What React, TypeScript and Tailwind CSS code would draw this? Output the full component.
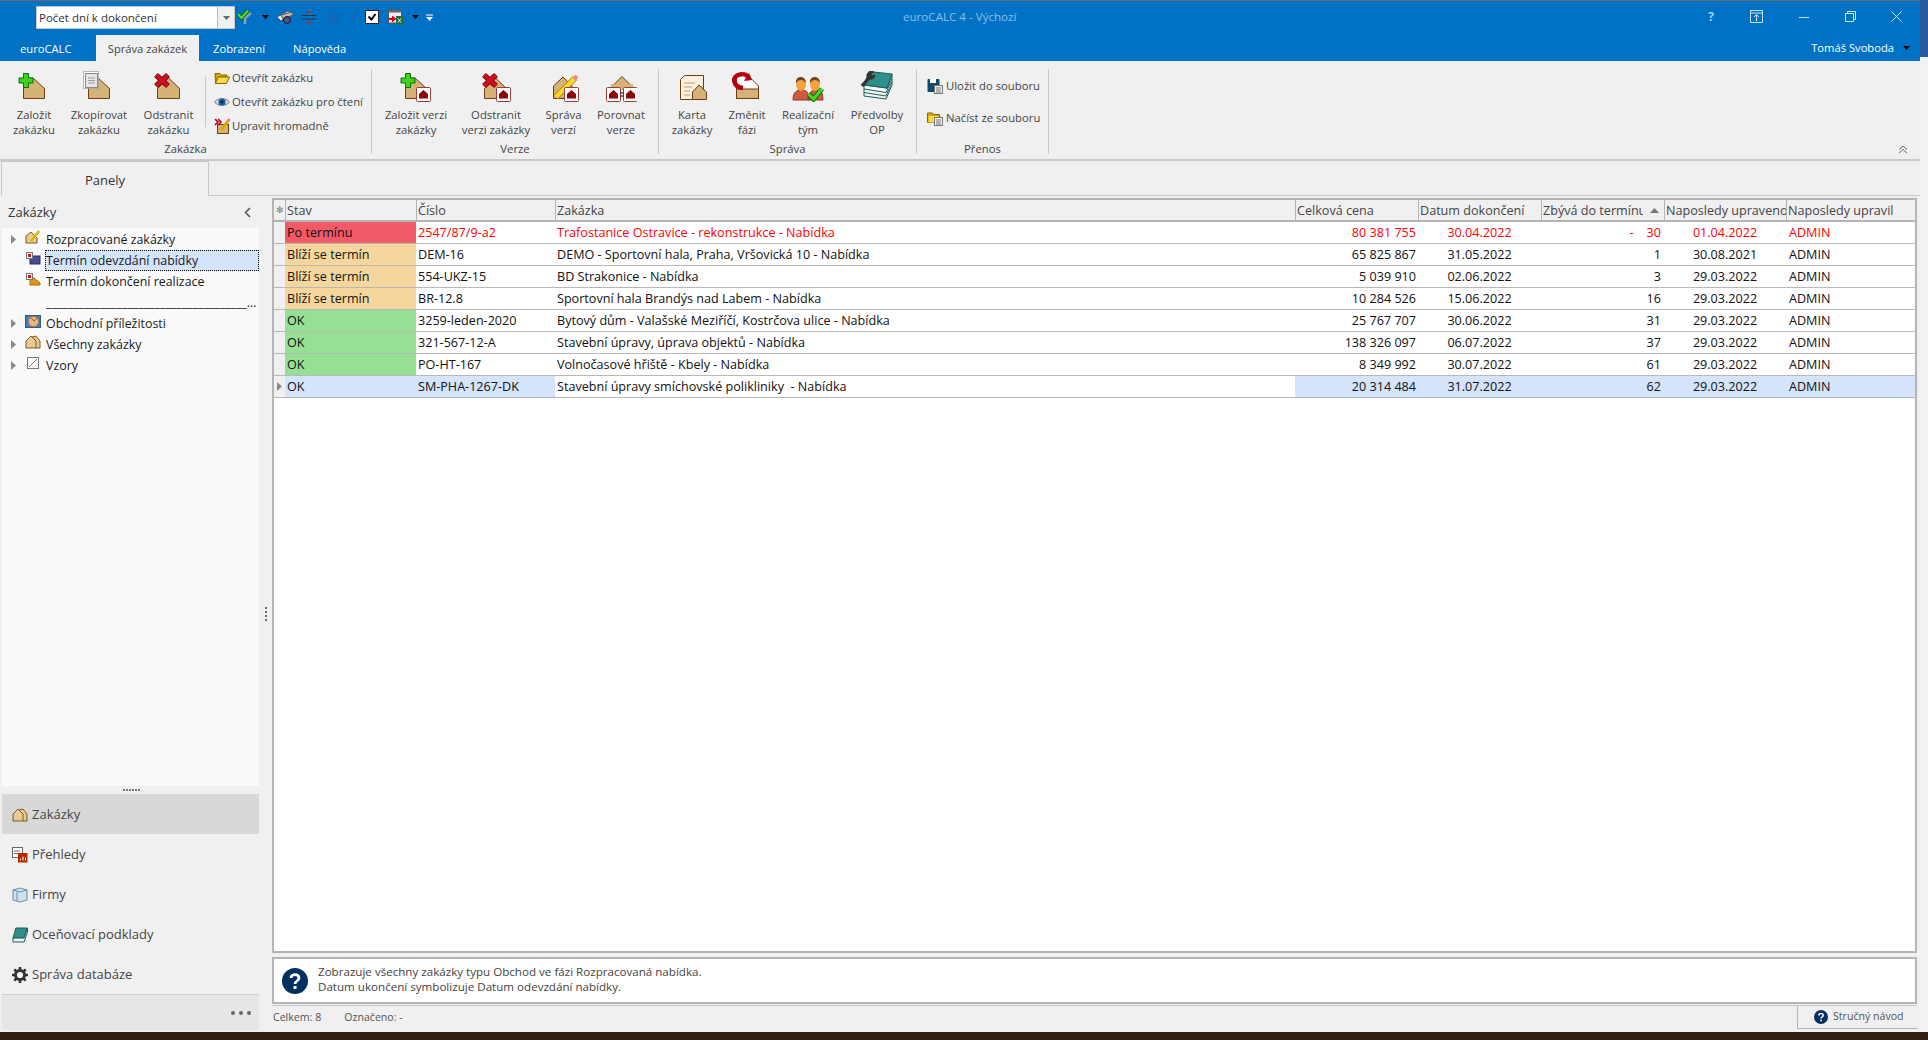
import type { ReactNode } from 'react';

const houseFill = '#d5b276';
const houseLine = '#6e3b12';

function Ico({ children, className = 'w-[32px] h-[32px]', box = 32 }: { children: ReactNode; className?: string; box?: number }) {
  return (
    <svg viewBox={`0 0 ${box} ${box}`} className={`${className} shrink-0`}>
      {children}
    </svg>
  );
}

const CutHouse = () => (
  <polygon points="5.5,8 15,8 26.5,18.5 26.5,28.5 5.5,28.5" fill={houseFill} stroke={houseLine} />
);
const PeakHouse = () => (
  <polygon points="15.5,8 26.5,18.5 26.5,28.5 4.5,28.5 4.5,18.5" fill={houseFill} stroke={houseLine} />
);
const Plus = () => (
  <polygon
    points="5.5,3.5 10.5,3.5 10.5,8 15,8 15,13 10.5,13 10.5,17.5 5.5,17.5 5.5,13 1,13 1,8 5.5,8"
    fill="#3fd41a"
    stroke="#0e6f0a"
  />
);
const Cross = ({ x = 0 }: { x?: number }) => (
  <g transform={`translate(${x} 0)`}>
    <path d="M3 5 L15 16 M15 5 L3 16" stroke="#6d0a10" strokeWidth="5.6" />
    <path d="M3 5 L15 16 M15 5 L3 16" stroke="#d5101c" strokeWidth="3.6" />
  </g>
);
const Badge = ({ x = 16.5 }: { x?: number }) => (
  <g transform={`translate(${x} 17.5)`}>
    <rect x="0" y="0" width="14" height="14" rx="1" fill="#fff" stroke="#9a3a3a" />
    <polygon points="7,2.5 11.5,6.5 11.5,11 2.5,11 2.5,6.5" fill="#8c0508" />
  </g>
);

const icons: Record<string, ReactNode> = {
  zalozit: (
    <Ico>
      <CutHouse />
      <Plus />
    </Ico>
  ),
  zkopirovat: (
    <Ico>
      <CutHouse />
      <rect x="0.5" y="1.5" width="15" height="17" fill="#fff" stroke="#777" strokeDasharray="1 1" />
      <rect x="2.5" y="3.5" width="12" height="14" fill="#e6e6e6" stroke="#888" />
      <path d="M5 8h7M5 10.5h7M5 13h7" stroke="#999" />
    </Ico>
  ),
  odstranit: (
    <Ico>
      <PeakHouse />
      <Cross />
    </Ico>
  ),
  zalozitVerzi: (
    <Ico>
      <CutHouse />
      <Plus />
      <Badge />
    </Ico>
  ),
  odstranitVerzi: (
    <Ico>
      <PeakHouse />
      <Cross x={1} />
      <Badge />
    </Ico>
  ),
  spravaVerzi: (
    <Ico>
      <polygon points="15,7 24,16 24,28.5 5.5,28.5 5.5,16" fill={houseFill} stroke={houseLine} />
      <path d="M8 27 L27 8" stroke="#b58a00" strokeWidth="6" />
      <path d="M8 27 L27 8" stroke="#ffd92e" strokeWidth="4" />
      <path d="M26 9 L29 6" stroke="#e88" strokeWidth="4" />
      <Badge />
    </Ico>
  ),
  porovnat: (
    <Ico>
      <polygon points="17,6.5 28,17.5 6,17.5" fill={houseFill} stroke={houseLine} />
      <rect x="6" y="14" width="22" height="6" fill={houseFill} />
      <Badge x={1.5} />
      <Badge x={18.5} />
      <path d="M15.5 23h3M15.5 26h3" stroke="#000" />
    </Ico>
  ),
  karta: (
    <Ico>
      <polygon points="8.5,5.5 27.5,5.5 27.5,29.5 4.5,29.5 4.5,9.5" fill="#fbf1e0" stroke={houseLine} />
      <path d="M8 13h11M8 17h8M8 21h6M8 25h6" stroke="#c49a6c" />
      <polygon points="23,15 30.5,22 30.5,29.5 16.5,29.5 16.5,22" fill={houseFill} stroke={houseLine} />
    </Ico>
  ),
  zmenit: (
    <Ico>
      <polygon points="5.5,4.5 16,4.5 27.5,16 27.5,28.5 5.5,28.5" fill="#fff" stroke={houseLine} />
      <rect x="5.5" y="19" width="22" height="9.5" fill={houseFill} stroke={houseLine} />
      <path d="M12 18 C2 17 0 6 9 4.5 C13 3.5 16 5 17 7" fill="none" stroke="#b4000c" strokeWidth="4.5" />
      <polygon points="13,11 21,10 18,3" fill="#b4000c" />
    </Ico>
  ),
  tym: (
    <Ico>
      <path d="M1 30 C1 22 5 20 9 20 C14 20 17 22 17 30Z" fill="#cf5a3c" stroke="#8c3a28" />
      <path d="M16 30 C16 22 20 20 24 20 C28 20 31 22 31 30Z" fill="#cf5a3c" stroke="#8c3a28" />
      <ellipse cx="9" cy="14" rx="5" ry="7" fill="#f6a13a" />
      <ellipse cx="23" cy="14" rx="5" ry="7" fill="#f6a13a" />
      <path d="M4 13 C3 5 14 5 14 13 C11 9 7 9 4 13Z" fill="#6b4a2a" />
      <path d="M18 13 C17 5 28 5 28 13 C25 9 21 9 18 13Z" fill="#6b4a2a" />
      <path d="M16.5 24 L21.5 29 L30 19" fill="none" stroke="#0c6a0c" strokeWidth="5" />
      <path d="M16.5 24 L21.5 29 L30 19" fill="none" stroke="#3fe01a" strokeWidth="3" />
    </Ico>
  ),
  predvolby: (
    <Ico>
      <path d="M3 15 L3 26 L25 29 L31 15 L31 4 L26 18Z" fill="#f2f7f6" stroke="#1c5c5a" />
      <path d="M3 19 L25 22.5 L31 8.5 M3 22.5 L25 26 L31 12" fill="none" stroke="#1c5c5a" />
      <polygon points="8,1.5 31,4 26,18 3,15" fill="#2f8f8a" stroke="#1c5c5a" />
      <path d="M1 16 L8 8" stroke="#333" strokeWidth="3.4" />
      <path d="M13 2 C8 0 4 4 7 8 C10 11 14 8 14 5 L11 6 L10 3Z" fill="#333" stroke="#333" />
    </Ico>
  ),
};

const sm = 'w-[16px] h-[16px]';

const FolderOpen = () => (
  <Ico box={16} className={sm}>
    <path d="M1 3.5h5l1 1.5h6v2H4L1.5 13.5z" fill="#d9a400" stroke="#8a6a00" />
    <polygon points="4,7 15.5,7 12.5,13.5 1.5,13.5" fill="#ffd84a" stroke="#8a6a00" />
  </Ico>
);
const EyeIcon = () => (
  <Ico box={16} className={sm}>
    <path d="M0.5 8 C4 3.5 12 3.5 15.5 8 C12 12.5 4 12.5 0.5 8Z" fill="#d6dde5" stroke="#6d7b8a" />
    <circle cx="8" cy="8" r="3.6" fill="#1a5fa8" />
    <circle cx="8" cy="8" r="1.4" fill="#06244a" />
  </Ico>
);
const HromadneIcon = () => (
  <Ico box={16} className={sm}>
    <rect x="3.5" y="6.5" width="11" height="9" fill={houseFill} stroke={houseLine} />
    <path d="M1 1l3 3-3 3M4 1l3 3-3 3" fill="none" stroke="#c00010" strokeWidth="1.6" />
    <path d="M7 12 L14 3" stroke="#d9a900" strokeWidth="3" />
    <path d="M14 3 L15.5 1" stroke="#e59" strokeWidth="2.4" />
  </Ico>
);
const SaveIcon = () => (
  <Ico box={16} className={sm}>
    <rect x="0.5" y="1" width="12" height="13" rx="1" fill="#0f4a66" />
    <rect x="3" y="1" width="6" height="4" fill="#fff" />
    <rect x="7.5" y="7.5" width="8" height="8" fill="#eee" stroke="#777" />
    <path d="M9 10h5M9 12h5M9 14h5" stroke="#777" />
  </Ico>
);
const LoadIcon = () => (
  <Ico box={16} className={sm}>
    <path d="M0.5 3h5l1 1.5h6v8h-12z" fill="#d9a400" stroke="#8a6a00" />
    <rect x="1.5" y="6" width="10" height="6.5" fill="#ffd84a" />
    <rect x="7.5" y="7.5" width="8" height="8" fill="#eee" stroke="#777" />
    <path d="M9 10h5M9 12h5M9 14h5" stroke="#777" />
  </Ico>
);

function LargeBtn({ icon, lines, className }: { icon: string; lines: string[]; className: string }) {
  return (
    <div className={`flex flex-col items-center pt-[9px] ${className}`}>
      {icons[icon]}
      <div className="mt-[5px] text-center leading-[15px] whitespace-nowrap">
        {lines.map(l => (
          <div key={l}>{l}</div>
        ))}
      </div>
    </div>
  );
}

function SmallBtn({ icon, label }: { icon: ReactNode; label: string }) {
  return (
    <div className="flex h-[24px] items-center gap-[3px] whitespace-nowrap">
      {icon}
      <span>{label}</span>
    </div>
  );
}

function RibbonGroup({ width, label, children }: { width: string; label: string; children: ReactNode }) {
  return (
    <div className={`flex ${width}`}>
      <div className="flex flex-1 flex-col">
        <div className="flex h-[78px]">{children}</div>
        <div className="h-[20px] text-center leading-[19px]">{label}</div>
      </div>
      <div className="mt-[8px] h-[85px] w-px bg-[#c8c8c8]" />
    </div>
  );
}

const Caret = ({ className = 'text-black' }: { className?: string }) => (
  <svg viewBox="0 0 7 4" className={`h-[4px] w-[7px] shrink-0 ${className}`}>
    <polygon points="0,0 7,0 3.5,4" fill="currentColor" />
  </svg>
);

function Qat() {
  return (
    <div className="flex w-[903px] items-start pl-[36px] pt-[5px]">
      <div className="flex h-[23px] w-[199px] border border-[#c8c8c8] bg-white">
        <div className="flex-1 pl-[2px] text-[11.5px] leading-[21px] text-[#333]">Počet dní k dokončení</div>
        <div className="flex w-[17px] items-center justify-center border-l border-[#b8b8b8] bg-[#f0f0f0]">
          <Caret className="text-[#666]" />
        </div>
      </div>
      <div className="flex h-[22px] items-center">
        <svg viewBox="0 0 16 16" className="ml-[2px] h-[16px] w-[16px]">
          <path d="M8 9 L14 4 M8 9 V15" stroke="#8aa0b0" strokeWidth="2.5" />
          <path d="M1 5 L4.5 9 L11 1.5" fill="none" stroke="#0d5a10" strokeWidth="3.6" />
          <path d="M1 5 L4.5 9 L11 1.5" fill="none" stroke="#58e020" strokeWidth="2" />
        </svg>
        <Caret className="ml-[9px] text-black" />
        <svg viewBox="0 0 18 16" className="ml-[7px] h-[16px] w-[18px]">
          <path d="M1 8 L12 2 L15 4 L5 12Z" fill="#eee" stroke="#555" />
          <path d="M5 6 L16 3 L17 6 L7 10Z" fill="#bbb" stroke="#555" />
          <circle cx="11" cy="11" r="3.5" fill="#5b4a6a" stroke="#2a1030" />
          <circle cx="11" cy="11" r="1.5" fill="#0072c6" />
        </svg>
        <svg viewBox="0 0 16 16" className="ml-[7px] h-[16px] w-[16px]">
          <path d="M1 6.5h14M1 10h14" stroke="#234" />
          <polygon points="8,4.5 5.5,2 10.5,2" fill="#e01010" />
          <polygon points="8,12 5.5,14.5 10.5,14.5" fill="#e01010" />
        </svg>
        <svg viewBox="0 0 16 16" className="ml-[8px] h-[16px] w-[16px]">
          <path d="M3 2v11M3 2h5M3 7h4M3 13h5M8 5h5v4H8zM8 11h5v4H8z" fill="none" stroke="#1f5fa8" />
        </svg>
        <Caret className="ml-[9px] text-[#1f5fa8]" />
        <svg viewBox="0 0 14 14" className="ml-[8px] h-[14px] w-[14px]">
          <rect x="0.5" y="0.5" width="13" height="13" fill="#fff" stroke="#222" />
          <path d="M3.5 6.5 L6.5 9.5 L10.5 4" fill="none" stroke="#000" strokeWidth="2" />
        </svg>
        <svg viewBox="0 0 16 16" className="ml-[9px] h-[16px] w-[16px]">
          <rect x="0.5" y="1" width="13" height="13" fill="#e8eef2" stroke="#555" />
          <rect x="0.5" y="1" width="13" height="2.5" fill="#666" />
          <rect x="8" y="7" width="7.5" height="8.5" fill="#1f6b3a" />
          <path d="M10 9.5l3 4M13 9.5l-3 4" stroke="#fff" />
          <path d="M1 9h3V6.5L8.5 10 4 13.5V11H1z" fill="#e0001a" />
        </svg>
        <Caret className="ml-[8px] text-black" />
        <svg viewBox="0 0 7 7" className="ml-[7px] h-[7px] w-[7px]">
          <path d="M0 1h7" stroke="#fff" />
          <polygon points="0,3 7,3 3.5,7" fill="#fff" />
        </svg>
      </div>
    </div>
  );
}

function WindowButtons() {
  return (
    <div className="flex flex-1 items-start justify-end pt-[9px] text-white">
      <span className="mr-[36px] text-[12px] font-bold leading-[14px] text-[#a9d0f0]">?</span>
      <svg viewBox="0 0 13 13" className="mr-[36px] h-[13px] w-[13px]">
        <path d="M0.5 0.5h12v12h-12zM0.5 3h12" fill="none" stroke="#cfe4f6" />
        <path d="M6.5 11V5M4 7l2.5-2.5L9 7" fill="none" stroke="#cfe4f6" />
      </svg>
      <div className="mr-[36px] mt-[7px] h-px w-[10px] bg-[#cfe4f6]" />
      <svg viewBox="0 0 11 11" className="mr-[35px] mt-px h-[11px] w-[11px]">
        <path d="M2.5 2.5v-2h8v8h-2M0.5 2.5h8v8h-8z" fill="none" stroke="#cfe4f6" />
      </svg>
      <svg viewBox="0 0 11 11" className="mr-[18px] mt-px h-[11px] w-[11px]">
        <path d="M0.5 0.5l10 10M10.5 0.5l-10 10" stroke="#cfe4f6" />
      </svg>
    </div>
  );
}

function Ribbon() {
  return (
    <div className="flex h-[100px] border-b-2 border-[#c8c8c8] bg-[#f0f0f0] text-[11.3px] text-[#444]">
      <RibbonGroup width="w-[372px]" label="Zakázka">
        <LargeBtn icon="zalozit" lines={['Založit', 'zakázku']} className="w-[68px]" />
        <LargeBtn icon="zkopirovat" lines={['Zkopírovat', 'zakázku']} className="w-[62px]" />
        <LargeBtn icon="odstranit" lines={['Odstranit', 'zakázku']} className="ml-[2px] w-[73px]" />
        <div className="mt-[15px] h-[51px] w-px bg-[#c8c8c8]" />
        <div className="flex flex-col pl-[8px] pt-[5px] [&_span]:-ml-px">
          <SmallBtn icon={<FolderOpen />} label="Otevřít zakázku" />
          <SmallBtn icon={<EyeIcon />} label="Otevřít zakázku pro čtení" />
          <SmallBtn icon={<HromadneIcon />} label="Upravit hromadně" />
        </div>
      </RibbonGroup>
      <RibbonGroup width="w-[287px]" label="Verze">
        <LargeBtn icon="zalozitVerzi" lines={['Založit verzi', 'zakázky']} className="ml-[4px] w-[80px]" />
        <LargeBtn icon="odstranitVerzi" lines={['Odstranit', 'verzi zakázky']} className="w-[80px]" />
        <LargeBtn icon="spravaVerzi" lines={['Správa', 'verzí']} className="ml-[2px] w-[51px]" />
        <LargeBtn icon="porovnat" lines={['Porovnat', 'verze']} className="ml-[2px] w-[60px]" />
      </RibbonGroup>
      <RibbonGroup width="w-[258px]" label="Správa">
        <LargeBtn icon="karta" lines={['Karta', 'zakázky']} className="ml-[8px] w-[50px]" />
        <LargeBtn icon="zmenit" lines={['Změnit', 'fázi']} className="ml-[5px] w-[50px]" />
        <LargeBtn icon="tym" lines={['Realizační', 'tým']} className="ml-[3px] w-[66px]" />
        <LargeBtn icon="predvolby" lines={['Předvolby', 'OP']} className="ml-[2px] w-[68px]" />
      </RibbonGroup>
      <RibbonGroup width="w-[132px]" label="Přenos">
        <div className="flex flex-col gap-[8px] pl-[10px] pt-[13px]">
          <SmallBtn icon={<SaveIcon />} label="Uložit do souboru" />
          <SmallBtn icon={<LoadIcon />} label="Načíst ze souboru" />
        </div>
      </RibbonGroup>
      <div className="flex flex-1 items-end justify-end pb-[5px] pr-[12px]">
        <svg viewBox="0 0 10 9" className="h-[9px] w-[10px]">
          <path d="M1 4.5L5 1l4 3.5M1 8L5 4.5 9 8" fill="none" stroke="#666" />
        </svg>
      </div>
    </div>
  );
}

const TreeCaret = () => (
  <svg viewBox="0 0 5 9" className="h-[9px] w-[5px] shrink-0">
    <polygon points="0,0 5,4.5 0,9" fill="#8a8a8a" />
  </svg>
);

function TreeRow({ caret, icon, children, selected }: { caret?: boolean; icon?: ReactNode; children: ReactNode; selected?: boolean }) {
  return (
    <div className="flex h-[21px] items-center">
      <div className="flex w-[23px] justify-center">{caret && <TreeCaret />}</div>
      <div className="w-[19px] -translate-y-[3px]">{icon}</div>
      <div
        className={`ml-[1px] w-[214px] truncate border leading-[19px] ${
          selected ? 'border-dotted border-black bg-[#d4e4fb]' : 'border-transparent'
        }`}
      >
        {children}
      </div>
    </div>
  );
}

const treeHouse = (
  <Ico box={16} className={sm}>
    <polygon points="1,7 6,2 7,3 11,2 15,7 15,14 1,14" fill="#e6cb94" stroke="#7a5a20" />
    <path d="M6 2L11 7V14" fill="none" stroke="#7a5a20" />
  </Ico>
);

function Tree() {
  return (
    <div className="h-[558px] bg-[#fafafa] pt-px text-[12.4px] text-[#1a1a1a]">
      <TreeRow
        caret
        icon={
          <Ico box={16} className={sm}>
            <polygon points="1,7 6,3 12,9 12,14 1,14" fill="#e6cb94" stroke="#7a5a20" />
            <path d="M6 12L14 2" stroke="#e0b000" strokeWidth="2.4" />
          </Ico>
        }
      >
        Rozpracované zakázky
      </TreeRow>
      <TreeRow
        selected
        icon={
          <Ico box={16} className={sm}>
            <rect x="5" y="6" width="10" height="8" fill="#4a4a9a" stroke="#2a2a6a" />
            <rect x="1.5" y="2.5" width="6" height="6" fill="#fff" stroke="#777" />
            <rect x="3" y="4" width="3" height="3" fill="#e01010" />
          </Ico>
        }
      >
        Termín odevzdání nabídky
      </TreeRow>
      <TreeRow
        icon={
          <Ico box={16} className={sm}>
            <path d="M5 14V7h4l6 5v2z" fill="#dd9a10" stroke="#a86a00" />
            <rect x="1.5" y="2.5" width="6" height="6" fill="#fff" stroke="#777" />
            <rect x="3" y="4" width="3" height="3" fill="#e01010" />
          </Ico>
        }
      >
        Termín dokončení realizace
      </TreeRow>
      <TreeRow>__________________________________________________</TreeRow>
      <TreeRow
        caret
        icon={
          <Ico box={16} className={sm}>
            <rect x="0.5" y="2.5" width="15" height="12" fill="#3b7fc4" stroke="#2a5a90" />
            <circle cx="8.5" cy="8.5" r="5.5" fill="#e6b48a" stroke="#8a5a30" />
            <path d="M6 5l3 3 3-3" fill="none" stroke="#8a5a30" />
          </Ico>
        }
      >
        Obchodní příležitosti
      </TreeRow>
      <TreeRow caret icon={treeHouse}>
        Všechny zakázky
      </TreeRow>
      <TreeRow
        caret
        icon={
          <Ico box={16} className={sm}>
            <rect x="2.5" y="2.5" width="11" height="11" fill="#fff" stroke="#777" />
            <path d="M4 12L12 4" stroke="#777" />
          </Ico>
        }
      >
        Vzory
      </TreeRow>
    </div>
  );
}

function NavItem({ icon, label, active }: { icon: ReactNode; label: string; active?: boolean }) {
  return (
    <div className={`flex h-[40px] items-center gap-[4px] pl-[10px] pt-[2px] text-[13px] font-medium text-[#444] ${active ? 'bg-[#d8d8d8]' : ''}`}>
      {icon}
      <span>{label}</span>
    </div>
  );
}

function LeftPanel() {
  return (
    <div className="ml-[2px] flex w-[257px] flex-col">
      <div className="flex h-[32px] items-center justify-between pl-[6px] pr-[8px] pt-px text-[13px] text-[#333]">
        <span>Zakázky</span>
        <svg viewBox="0 0 7 11" className="h-[11px] w-[7px]">
          <path d="M6 1L1.5 5.5 6 10" fill="none" stroke="#555" strokeWidth="1.6" />
        </svg>
      </div>
      <Tree />
      <div className="flex h-[8px] items-center justify-center gap-px pl-[1px]">
        {[0, 1, 2, 3, 4, 5].map(i => (
          <div key={i} className="h-[2px] w-[2px] bg-[#777]" />
        ))}
      </div>
      <NavItem active icon={treeHouse} label="Zakázky" />
      <NavItem
        label="Přehledy"
        icon={
          <Ico box={16} className={sm}>
            <rect x="0.5" y="0.5" width="10" height="10" fill="#fff" stroke="#666" />
            <path d="M2 4h6M2 6.5h4" stroke="#666" />
            <rect x="6" y="6" width="9.5" height="9.5" fill="#b32a00" />
            <path d="M8.5 13.5v-2M11 13.5v-4M13.5 13.5v-3" stroke="#fff" />
          </Ico>
        }
      />
      <NavItem
        label="Firmy"
        icon={
          <Ico box={16} className={sm}>
            <path d="M1 3l7-2 7 2v10l-7 2-7-2z" fill="#cfe2f0" stroke="#6a8eaa" />
            <path d="M1 3l7 2 7-2M5 5v9" fill="none" stroke="#6a8eaa" />
          </Ico>
        }
      />
      <NavItem
        label="Oceňovací podklady"
        icon={
          <Ico box={16} className={sm}>
            <path d="M4 1h11.5L12 11H1z" fill="#2f8f8a" stroke="#1c5c5a" />
            <path d="M1 11h11l3.5-10v4L12 15H1z" fill="#e8f2f0" stroke="#1c5c5a" />
          </Ico>
        }
      />
      <NavItem
        label="Správa databáze"
        icon={
          <Ico box={16} className={sm}>
            <circle cx="8" cy="8" r="4.6" fill="none" stroke="#333" strokeWidth="3" />
            <path d="M8 0v3M8 13v3M0 8h3M13 8h3M2.3 2.3l2.1 2.1M11.6 11.6l2.1 2.1M2.3 13.7l2.1-2.1M11.6 4.4l2.1-2.1" stroke="#333" strokeWidth="2.6" />
          </Ico>
        }
      />
      <div className="flex h-[36px] items-start justify-end gap-[4px] border-t border-[#d0d0d0] bg-[#e6e6e6] pr-[8px] pt-[16px]">
        <div className="h-[4px] w-[4px] rounded-full bg-[#666]" />
        <div className="h-[4px] w-[4px] rounded-full bg-[#666]" />
        <div className="h-[4px] w-[4px] rounded-full bg-[#666]" />
      </div>
    </div>
  );
}

type Row = { stav: string; tone: string; cislo: string; zakazka: string; cena: string; datum: string; zbyva: string; upraveno: string };

const rows: Row[] = [
  { stav: 'Po termínu', tone: 'bg-[#f25a68]', cislo: '2547/87/9-a2', zakazka: 'Trafostanice Ostravice - rekonstrukce - Nabídka', cena: '80 381 755', datum: '30.04.2022', zbyva: '30', upraveno: '01.04.2022' },
  { stav: 'Blíží se termín', tone: 'bg-[#f5d79e]', cislo: 'DEM-16', zakazka: 'DEMO - Sportovní hala, Praha, Vršovická 10 - Nabídka', cena: '65 825 867', datum: '31.05.2022', zbyva: '1', upraveno: '30.08.2021' },
  { stav: 'Blíží se termín', tone: 'bg-[#f5d79e]', cislo: '554-UKZ-15', zakazka: 'BD Strakonice - Nabídka', cena: '5 039 910', datum: '02.06.2022', zbyva: '3', upraveno: '29.03.2022' },
  { stav: 'Blíží se termín', tone: 'bg-[#f5d79e]', cislo: 'BR-12.8', zakazka: 'Sportovní hala Brandýs nad Labem - Nabídka', cena: '10 284 526', datum: '15.06.2022', zbyva: '16', upraveno: '29.03.2022' },
  { stav: 'OK', tone: 'bg-[#96e096]', cislo: '3259-leden-2020', zakazka: 'Bytový dům - Valašské Meziříčí, Kostrčova ulice - Nabídka', cena: '25 767 707', datum: '30.06.2022', zbyva: '31', upraveno: '29.03.2022' },
  { stav: 'OK', tone: 'bg-[#96e096]', cislo: '321-567-12-A', zakazka: 'Stavební úpravy, úprava objektů - Nabídka', cena: '138 326 097', datum: '06.07.2022', zbyva: '37', upraveno: '29.03.2022' },
  { stav: 'OK', tone: 'bg-[#96e096]', cislo: 'PO-HT-167', zakazka: 'Volnočasové hřiště - Kbely - Nabídka', cena: '8 349 992', datum: '30.07.2022', zbyva: '61', upraveno: '29.03.2022' },
  { stav: 'OK', tone: 'bg-[#d4e4fb]', cislo: 'SM-PHA-1267-DK', zakazka: 'Stavební úpravy smíchovské polikliniky  - Nabídka', cena: '20 314 484', datum: '31.07.2022', zbyva: '62', upraveno: '29.03.2022' },
];

const gridCols = 'grid grid-cols-[11px_131px_139px_740px_123px_123px_123px_122px_129px]';
const headCell = 'overflow-hidden whitespace-nowrap border-l border-[#b4b4b4] pl-[1px] leading-[22px]';

function DataGrid() {
  return (
    <div className="h-[755px] border-2 border-[#b4b4b4] bg-white text-[12.6px]">
      <div className={`${gridCols} h-[22px] grid-rows-[20px] border-b-2 border-[#b4b4b4] bg-[#f0f0f0] text-[#444]`}>
        <div className="text-center text-[9px] leading-[20px] text-[#777]">✻</div>
        <div className={headCell}>Stav</div>
        <div className={headCell}>Číslo</div>
        <div className={headCell}>Zakázka</div>
        <div className={headCell}>Celková cena</div>
        <div className={headCell}>Datum dokončení</div>
        <div className={`${headCell} flex items-start justify-between pr-[5px]`}>
          <span className="w-[100px] overflow-hidden whitespace-nowrap">Zbývá do termínu</span>
          <svg viewBox="0 0 9 5" className="h-[5px] w-[9px] self-center">
            <polygon points="4.5,0 9,5 0,5" fill="#777" />
          </svg>
        </div>
        <div className={headCell}>Naposledy upraveno</div>
        <div className={headCell}>Naposledy upravil</div>
      </div>
      {rows.map((r, i) => {
        const late = i === 0;
        const sel = i === 7;
        const tint = sel ? 'bg-[#d4e4fb]' : '';
        const ink = late ? 'text-[#ff0000]' : 'text-[#111]';
        return (
          <div key={r.cislo} className={`${gridCols} h-[22px] grid-rows-[21px] border-b border-[#b8b8b8] leading-[22px] ${ink}`}>
            <div className="flex items-center justify-center bg-[#f0f0f0]">{sel && <TreeCaret />}</div>
            <div className={`pl-[2px] text-[#111] ${r.tone}`}>{r.stav}</div>
            <div className={`pl-[2px] ${tint}`}>{r.cislo}</div>
            <div className="whitespace-pre pl-[2px]">{r.zakazka}</div>
            <div className={`pr-[2px] text-right ${tint}`}>{r.cena}</div>
            <div className={`text-center ${tint}`}>{r.datum}</div>
            <div className={`flex items-start justify-end gap-[13px] pr-[3px] ${tint}`}>
              {late && <span>-</span>}
              <span>{r.zbyva}</span>
            </div>
            <div className={`text-center ${tint}`}>{r.upraveno}</div>
            <div className={`pl-[3px] ${tint}`}>ADMIN</div>
          </div>
        );
      })}
    </div>
  );
}

const HelpDisc = ({ className }: { className: string }) => (
  <svg viewBox="0 0 26 26" className={`${className} shrink-0`}>
    <circle cx="13" cy="13" r="13" fill="#02305f" />
    <path d="M9 10 C9 5.5 17 5.5 17 10 C17 13 13 13 13 16" fill="none" stroke="#fff" strokeWidth="2.8" />
    <rect x="11.5" y="18" width="3" height="3" fill="#fff" />
  </svg>
);

export default function App() {
  return (
    <div className="flex h-[1040px] w-[1928px] flex-col overflow-hidden bg-[#2f2014] font-['Open_Sans',sans-serif] text-[12px]">
      <div className="flex h-[1032px]">
        <div className="flex w-[1920px] flex-col bg-[#f0f0f0]">
          <div className="flex h-[61px] flex-col border-t border-[#5f6b75] bg-[#0072c6]">
            <div className="flex h-[34px]">
              <Qat />
              <div className="w-[115px] whitespace-nowrap pt-[8px] text-[11.6px] leading-[16px] text-[#8fbfe8]">euroCALC 4 - Výchozí</div>
              <WindowButtons />
            </div>
            <div className="flex h-[26px] items-end text-[11.2px]">
              <div className="w-[96px] pb-[4px] pl-[20px] leading-[16px] text-white">euroCALC</div>
              <div className="flex h-[26px] w-[103px] items-center justify-center bg-[#f0f0f0] pt-[2px] text-[#444]">Správa zakázek</div>
              <div className="w-[94px] pb-[4px] pl-[14px] leading-[16px] text-white">Zobrazení</div>
              <div className="pb-[4px] leading-[16px] text-white">Nápověda</div>
              <div className="flex flex-1 items-center justify-end gap-[9px] self-center pr-[10px] leading-[16px] text-white">
                <span>Tomáš Svoboda</span>
                <Caret className="text-black" />
              </div>
            </div>
          </div>
          <Ribbon />
          <div className="flex h-[35px] items-end">
            <div className="ml-px flex h-[35px] w-[208px] items-center justify-center border-x border-t border-[#c8c8c8] pt-[4px] text-[13px] text-[#333]">Panely</div>
            <div className="h-px flex-1 bg-[#c8c8c8]" />
          </div>
          <div className="flex flex-1 min-h-0">
            <LeftPanel />
            <div className="flex w-[13px] items-center justify-center">
              <div className="flex flex-col gap-[2px]">
                <div className="h-[2px] w-[2px] bg-[#666]" />
                <div className="h-[2px] w-[2px] bg-[#666]" />
                <div className="h-[2px] w-[2px] bg-[#666]" />
                <div className="h-[2px] w-[2px] bg-[#666]" />
              </div>
            </div>
            <div className="flex w-[1645px] flex-col pt-[2px]">
              <DataGrid />
              <div className="mt-[4px] flex h-[47px] items-center gap-[10px] border-2 border-[#b4b4b4] bg-white pl-[8px] text-[11.6px] text-[#444]">
                <HelpDisc className="h-[26px] w-[26px]" />
                <div className="pb-[4px] leading-[15px]">
                  <div>Zobrazuje všechny zakázky typu Obchod ve fázi Rozpracovaná nabídka.</div>
                  <div>Datum ukončení symbolizuje Datum odevzdání nabídky.</div>
                </div>
              </div>
              <div className="mt-px flex h-[24px] items-center justify-between border-t border-[#c8c8c8] pl-px text-[10.6px] text-[#555]">
                <div className="flex gap-[23px]">
                  <span>Celkem: 8</span>
                  <span>Označeno: -</span>
                </div>
                <div className="-mr-px flex h-[23px] w-[121px] items-center gap-[5px] border-b border-l border-[#b4b4b4] pl-[16px]">
                  <HelpDisc className="h-[14px] w-[14px]" />
                  <span>Stručný návod</span>
                </div>
              </div>
            </div>
          </div>
        </div>
        <div className="flex w-[8px] flex-col bg-[#f2f2f2]">
          <div className="h-[57px] bg-[#2c5a9f]" />
        </div>
      </div>
    </div>
  );
}
